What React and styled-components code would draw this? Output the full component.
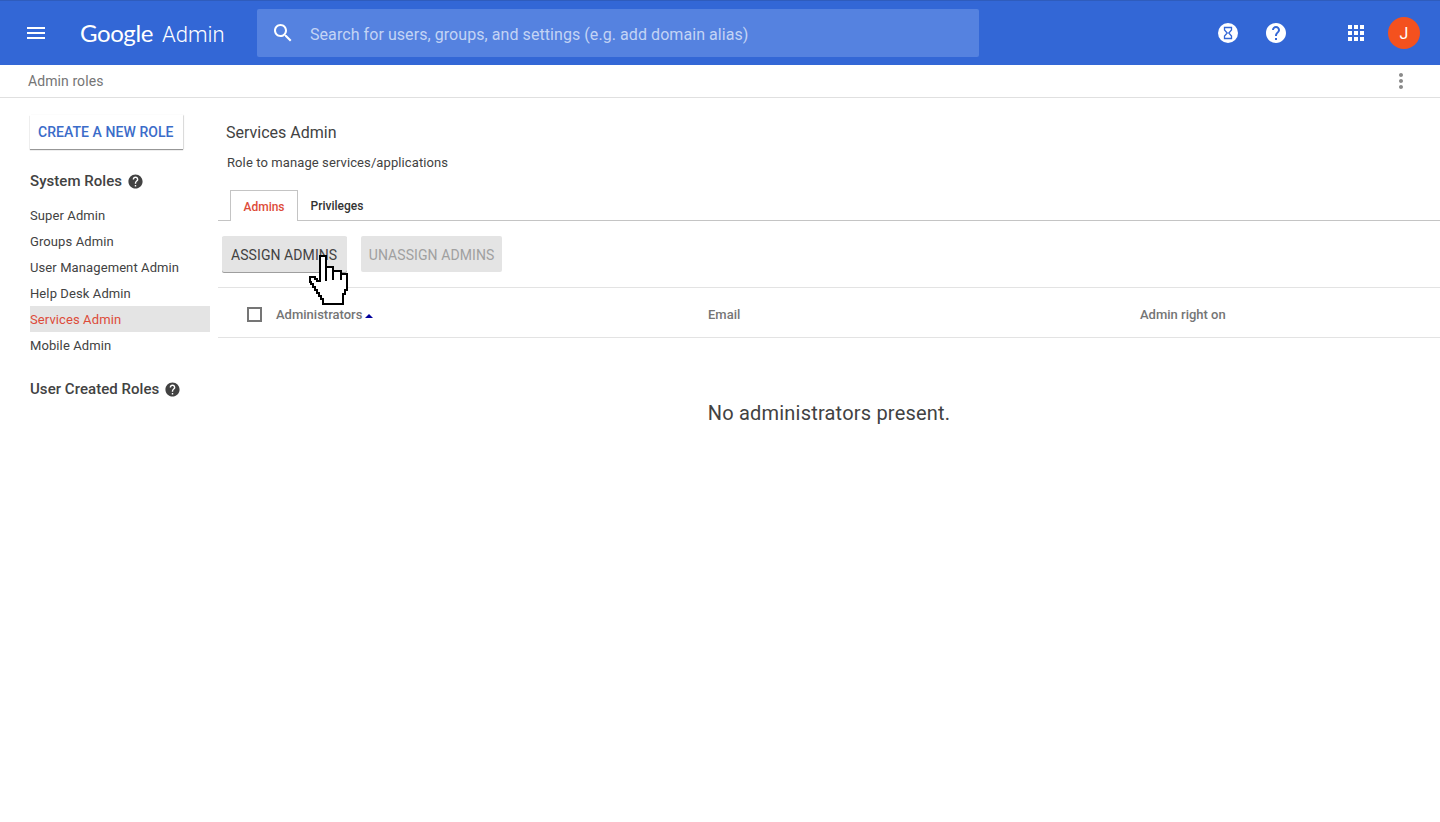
import React from "react";
import styled, { createGlobalStyle } from "styled-components";

const GlobalStyle = createGlobalStyle`
  html, body {
    margin: 0;
    padding: 0;
    background: #fff;
    font-family: Roboto, "Liberation Sans", sans-serif;
  }
`;

const systemRoles = [
  "Super Admin",
  "Groups Admin",
  "User Management Admin",
  "Help Desk Admin",
  "Services Admin",
  "Mobile Admin",
];

const paths = {
  menu: "M3 18h18v-2H3v2zm0-5h18v-2H3v2zm0-7v2h18V6H3z",
  search:
    "M15.5 14h-.79l-.28-.27C15.41 12.59 16 11.11 16 9.5 16 5.91 13.09 3 9.5 3S3 5.91 3 9.5 5.91 16 9.5 16c1.61 0 3.09-.59 4.23-1.57l.27.28v.79l5 4.99L20.49 19l-4.99-5zm-6 0C7.01 14 5 11.99 5 9.5S7.01 5 9.5 5 14 7.01 14 9.5 11.99 14 9.5 14z",
  help: "M12 2C6.48 2 2 6.48 2 12s4.48 10 10 10 10-4.48 10-10S17.52 2 12 2zm1 17h-2v-2h2v2zm2.07-7.75l-.9.92C13.45 12.9 13 13.5 13 15h-2v-.5c0-1.1.45-2.1 1.17-2.83l1.24-1.26c.37-.36.59-.86.59-1.41 0-1.1-.9-2-2-2s-2 .9-2 2H8c0-2.21 1.79-4 4-4s4 1.79 4 4c0 .88-.36 1.68-.93 2.25z",
  apps: "M4 8h4V4H4v4zm6 12h4v-4h-4v4zm-6 0h4v-4H4v4zm0-6h4v-4H4v4zm6 0h4v-4h-4v4zm6-10v4h4V4h-4zm-6 4h4V4h-4v4zm6 6h4v-4h-4v4zm0 6h4v-4h-4v4z",
  more: "M12 8c1.1 0 2-.9 2-2s-.9-2-2-2-2 .9-2 2 .9 2 2 2zm0 2c-1.1 0-2 .9-2 2s.9 2 2 2 2-.9 2-2-.9-2-2-2zm0 6c-1.1 0-2 .9-2 2s.9 2 2 2 2-.9 2-2-.9-2-2-2z",
};

const Icon = ({ name, size = 24, color = "#fff" }) => (
  <svg width={size} height={size} viewBox="0 0 24 24" fill={color} aria-hidden="true">
    <path d={paths[name]} />
  </svg>
);

const Hourglass = () => (
  <svg width="24" height="24" viewBox="0 0 24 24" aria-hidden="true">
    <circle cx="12" cy="12" r="10" fill="#fff" />
    <path
      d="M8.500 6.500h7v2.400L12.800 12l2.700 3.100v2.400h-7v-2.400l2.700-3.100-2.700-3.100z"
      fill="none"
      stroke="#3367d6"
      strokeWidth="1.300"
    />
  </svg>
);

const HandCursor = () => (
  <CursorWrap>
    <svg width="42" height="54" viewBox="0 0 42 54" shapeRendering="crispEdges" aria-hidden="true">
      <path
        d="M12 3H18V14H25V18H33V21H39V37H37V41H35V51H15V46H13V43H11V40H9V37H7V34H5V31H3V29H2V24H7V26H9V28H12Z"
        fill="#fff"
        stroke="#000"
        strokeWidth="2"
      />
      <path d="M18 14V28M25 18V27M33 21V27" stroke="#000" strokeWidth="2" fill="none" />
    </svg>
  </CursorWrap>
);

const Page = styled.div`
  position: relative;
  min-height: 822px;
  background: #fff;
`;

const Header = styled.header`
  display: flex;
  align-items: center;
  height: 65px;
  box-sizing: border-box;
  background: #3367d6;
  border-top: 1px solid #2f5cbc;
  padding-right: 12px;
`;

const MenuButton = styled.div`
  display: flex;
  align-items: center;
  justify-content: center;
  width: 72px;
`;

const Logo = styled.div`
  display: flex;
  align-items: baseline;
  gap: 9px;
  width: 177px;
  margin: -2px 0 0 8px;
  color: #fff;
`;

const LogoWord = styled.span`
  font-family: Lato, Roboto, sans-serif;
  font-size: 24px;
  letter-spacing: -0.4px;
`;

const LogoProduct = styled.span`
  font-family: Roboto, sans-serif;
  font-weight: 300;
  font-size: 22px;
`;

const Search = styled.div`
  display: flex;
  align-items: center;
  width: 722px;
  height: 48px;
  border-radius: 2px;
  background: #5582e0;
  padding-left: 14px;
  box-sizing: border-box;
  gap: 15px;
`;

const SearchHint = styled.span`
  padding-top: 2px;
  font-size: 16px;
  color: #c3d4f5;
  letter-spacing: 0.065px;
`;

const HeaderActions = styled.div`
  display: flex;
  align-items: center;
  margin-left: auto;
`;

const ActionSlot = styled.div`
  display: flex;
  align-items: center;
  justify-content: center;
  width: 48px;
  margin-left: ${(p) => (p.$gap ? "32px" : "0")};
`;

const Avatar = styled.div`
  display: flex;
  align-items: center;
  justify-content: center;
  width: 32px;
  height: 32px;
  border-radius: 50%;
  background: #f4511e;
  color: #fff;
  font-size: 16px;
`;

const SubBar = styled.div`
  display: flex;
  align-items: center;
  justify-content: space-between;
  height: 33px;
  box-sizing: border-box;
  padding: 0 27px 0 28px;
  border-bottom: 1px solid #e0e0e0;
  font-size: 14px;
  letter-spacing: 0.08px;
  color: #757575;
`;

const Body = styled.div`
  display: flex;
`;

const Sidebar = styled.aside`
  width: 218px;
  flex-shrink: 0;
  box-sizing: border-box;
  padding: 17px 8px 0 30px;
`;

const CreateButton = styled.div`
  display: inline-flex;
  align-items: center;
  height: 34px;
  padding: 0 9px 0 8px;
  font-size: 14px;
  font-weight: 500;
  letter-spacing: 0.06px;
  color: #3b6cc9;
  background: #fff;
  box-shadow: 0 1px 1px rgba(0, 0, 0, 0.4), 1px 0 1px rgba(0, 0, 0, 0.08);
`;

const SectionTitle = styled.div`
  display: flex;
  align-items: center;
  gap: 4.5px;
  height: 24px;
  margin-top: ${(p) => p.$top}px;
  margin-bottom: ${(p) => p.$bottom || 0}px;
  font-size: 15px;
  font-weight: 500;
  letter-spacing: 0.05px;
  color: #424242;
`;

const RoleItem = styled.div`
  height: 26px;
  line-height: 28px;
  font-size: 13px;
  letter-spacing: 0.1px;
  color: ${(p) => (p.$active ? "#dd4b39" : "#424242")};
  background: ${(p) => (p.$active ? "#e4e4e4" : "transparent")};
`;

const Main = styled.main`
  flex: 1;
  min-width: 0;
  padding-top: 24px;
`;

const RoleTitle = styled.div`
  margin-left: 8px;
  font-size: 16px;
  line-height: 22px;
  color: #424242;
`;

const RoleDesc = styled.div`
  margin: 10px 0 0 9px;
  font-size: 13px;
  line-height: 18px;
  letter-spacing: 0.1px;
  color: #424242;
`;

const Tabs = styled.div`
  display: flex;
  margin-top: 18px;
  padding-left: 12px;
  height: 30px;
  border-bottom: 1px solid #c4c4c4;
`;

const Tab = styled.div`
  display: flex;
  align-items: center;
  justify-content: center;
  box-sizing: border-box;
  width: ${(p) => (p.$active ? "68px" : "78px")};
  height: 30px;
  padding-top: 2px;
  font-size: 12px;
  font-weight: 500;
  color: ${(p) => (p.$active ? "#dd4b39" : "#333")};
  ${(p) =>
    p.$active &&
    `
    height: 31px;
    background: #fff;
    border: 1px solid #c4c4c4;
    border-bottom: 0;
  `}
`;

const Toolbar = styled.div`
  display: flex;
  gap: 14px;
  padding: 15px 0 15px 4px;
  border-bottom: 1px solid #e3e3e3;
`;

const ActionButton = styled.div`
  display: flex;
  align-items: center;
  height: 36px;
  box-sizing: border-box;
  padding: 2px ${(p) => (p.$disabled ? "8px 0 8px" : "9.500px 0 9px")};
  font-size: 14px;
  letter-spacing: 0.08px;
  border-radius: 2px;
  background: #e4e4e4;
  color: ${(p) => (p.$disabled ? "#a0a0a0" : "#424242")};
  box-shadow: ${(p) => (p.$disabled ? "none" : "0 1px 0 #9e9e9e")};
`;

const TableHead = styled.div`
  display: grid;
  grid-template-columns: 490px 432px 1fr;
  align-items: center;
  height: 50px;
  box-sizing: border-box;
  padding-top: 3px;
  border-bottom: 1px solid #e3e3e3;
  font-size: 13px;
  font-weight: 500;
  color: #757575;
`;

const NameCell = styled.div`
  display: flex;
  align-items: center;
  padding-left: 29px;
`;

const Checkbox = styled.span`
  width: 11px;
  height: 11px;
  border: 2px solid #757575;
  margin-right: 14px;
`;

const SortArrow = styled.span`
  width: 0;
  height: 0;
  margin: 4px 0 0 3px;
  border-left: 4px solid transparent;
  border-right: 4px solid transparent;
  border-bottom: 4px solid #00009c;
`;

const EmptyState = styled.div`
  margin-top: 62px;
  text-align: center;
  font-size: 20px;
  line-height: 26px;
  letter-spacing: 0.2px;
  color: #424242;
`;

const CursorWrap = styled.div`
  position: absolute;
  left: 308px;
  top: 253px;
  line-height: 0;
`;

export default function App() {
  return (
    <Page>
      <GlobalStyle />
      <Header>
        <MenuButton>
          <Icon name="menu" />
        </MenuButton>
        <Logo>
          <LogoWord>Google</LogoWord>
          <LogoProduct>Admin</LogoProduct>
        </Logo>
        <Search>
          <Icon name="search" />
          <SearchHint>Search for users, groups, and settings (e.g. add domain alias)</SearchHint>
        </Search>
        <HeaderActions>
          <ActionSlot>
            <Hourglass />
          </ActionSlot>
          <ActionSlot>
            <Icon name="help" />
          </ActionSlot>
          <ActionSlot $gap>
            <Icon name="apps" />
          </ActionSlot>
          <ActionSlot>
            <Avatar>J</Avatar>
          </ActionSlot>
        </HeaderActions>
      </Header>
      <SubBar>
        <span>Admin roles</span>
        <Icon name="more" color="#8a8a8a" />
      </SubBar>
      <Body>
        <Sidebar>
          <CreateButton>CREATE A NEW ROLE</CreateButton>
          <SectionTitle $top={20} $bottom={9}>
            System Roles <Icon name="help" size={17} color="#424242" />
          </SectionTitle>
          {systemRoles.map((role) => (
            <RoleItem key={role} $active={role === "Services Admin"}>
              {role}
            </RoleItem>
          ))}
          <SectionTitle $top={19}>
            User Created Roles <Icon name="help" size={17} color="#424242" />
          </SectionTitle>
        </Sidebar>
        <Main>
          <RoleTitle>Services Admin</RoleTitle>
          <RoleDesc>Role to manage services/applications</RoleDesc>
          <Tabs>
            <Tab $active>Admins</Tab>
            <Tab>Privileges</Tab>
          </Tabs>
          <Toolbar>
            <ActionButton>ASSIGN ADMINS</ActionButton>
            <ActionButton $disabled>UNASSIGN ADMINS</ActionButton>
          </Toolbar>
          <TableHead>
            <NameCell>
              <Checkbox />
              Administrators
              <SortArrow />
            </NameCell>
            <div>Email</div>
            <div>Admin right on</div>
          </TableHead>
          <EmptyState>No administrators present.</EmptyState>
        </Main>
      </Body>
      <HandCursor />
    </Page>
  );
}
